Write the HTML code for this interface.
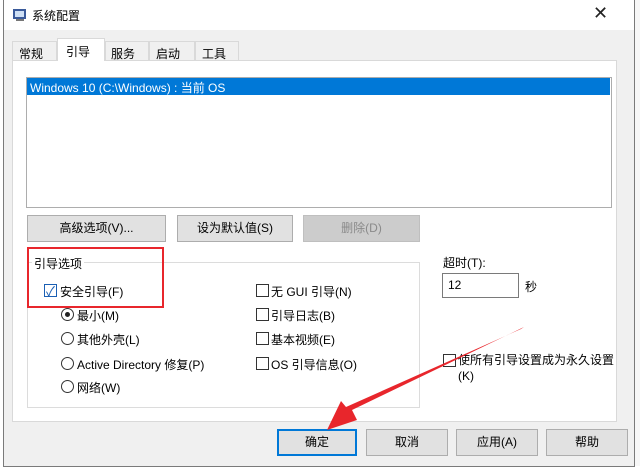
<!DOCTYPE html>
<html><head><meta charset="utf-8"><style>
*{box-sizing:border-box;margin:0;padding:0}
body{width:640px;height:473px;background:#fff;position:relative;overflow:hidden;font-family:"Liberation Sans","Noto Sans CJK SC",sans-serif;font-size:12px;color:#000}
.a{position:absolute}
.btn{position:absolute;background:#e1e1e1;border:1px solid #adadad;text-align:center;line-height:24px;font-size:12px}
.cb{position:absolute;width:13px;height:13px;border:1px solid #333;background:#fff}
.rb{position:absolute;width:13px;height:13px;border:1px solid #333;border-radius:50%;background:#fff}
</style></head><body>
<div class="a" style="left:634px;top:0;width:6px;height:473px;background:#f7f7f7"></div>
<div class="a" style="left:0;top:466px;width:640px;height:7px;background:#fff"></div>
<div class="a" style="left:3px;top:0;width:632px;height:467px;background:#f0f0f0;border:1px solid #7a7a7a"></div>
<div class="a" style="left:4px;top:0;width:630px;height:30px;background:#fff"></div>
<svg class="a" style="left:12px;top:7px" width="16" height="16"><rect x="1" y="2" width="13" height="10" fill="#3a5a9a"/><rect x="3" y="4" width="9" height="6" fill="#cfe0f5"/><rect x="4" y="12" width="8" height="2" fill="#777"/></svg>
<div class="a" style="left:32px;top:7px;font-size:12px">系统配置</div>
<div class="a" style="left:593px;top:3px;font-size:18px;color:#222">✕</div>
<div class="a" style="left:12px;top:60px;width:605px;height:362px;background:#fff;border:1px solid #d9d9d9"></div>
<div class="a" style="left:12px;top:41px;width:45px;height:20px;background:#f0f0f0;border:1px solid #d9d9d9;padding:3px 6px">常规</div>
<div class="a" style="left:57px;top:38px;width:48px;height:23px;background:#fff;border:1px solid #d9d9d9;border-bottom:none;padding:4px 8px">引导</div>
<div class="a" style="left:105px;top:41px;width:44px;height:20px;background:#f0f0f0;border:1px solid #d9d9d9;padding:3px 5px">服务</div>
<div class="a" style="left:149px;top:41px;width:46px;height:20px;background:#f0f0f0;border:1px solid #d9d9d9;padding:3px 6px">启动</div>
<div class="a" style="left:195px;top:41px;width:44px;height:20px;background:#f0f0f0;border:1px solid #d9d9d9;padding:3px 6px">工具</div>
<div class="a" style="left:26px;top:77px;width:586px;height:131px;border:1px solid #adadad;background:#fff"></div>
<div class="a" style="left:27px;top:78px;width:583px;height:17px;background:#0078d7;color:#fff;padding:1px 3px;font-size:12px">Windows 10 (C:\Windows) : 当前 OS</div>
<div class="btn" style="left:27px;top:215px;width:139px;height:27px">高级选项(V)...</div>
<div class="btn" style="left:177px;top:215px;width:116px;height:27px">设为默认值(S)</div>
<div class="btn" style="left:303px;top:215px;width:117px;height:27px;background:#ccc;border-color:#bfbfbf;color:#8a8a8a">删除(D)</div>
<div class="a" style="left:27px;top:262px;width:393px;height:146px;border:1px solid #dcdcdc"></div>
<div class="a" style="left:32px;top:255px;background:#fff;padding:0 2px">引导选项</div>
<div class="a" style="left:27px;top:247px;width:137px;height:61px;border:2px solid #e8262c"></div>
<div class="cb" style="left:44px;top:284px;border-color:#1a5fb4"></div>
<div class="a" style="left:46px;top:281px;color:#1a5fb4;font-size:13px">✓</div>
<div class="a" style="left:60px;top:283px">安全引导(F)</div>
<div class="rb" style="left:61px;top:308px"></div><div class="a" style="left:65px;top:312px;width:5px;height:5px;border-radius:50%;background:#222"></div>
<div class="a" style="left:77px;top:307px">最小(M)</div>
<div class="rb" style="left:61px;top:332px"></div><div class="a" style="left:77px;top:331px">其他外壳(L)</div>
<div class="rb" style="left:61px;top:357px"></div><div class="a" style="left:77px;top:356px">Active Directory 修复(P)</div>
<div class="rb" style="left:61px;top:380px"></div><div class="a" style="left:77px;top:379px">网络(W)</div>
<div class="cb" style="left:256px;top:284px"></div><div class="a" style="left:271px;top:283px">无 GUI 引导(N)</div>
<div class="cb" style="left:256px;top:308px"></div><div class="a" style="left:271px;top:307px">引导日志(B)</div>
<div class="cb" style="left:256px;top:332px"></div><div class="a" style="left:271px;top:331px">基本视频(E)</div>
<div class="cb" style="left:256px;top:357px"></div><div class="a" style="left:271px;top:356px">OS 引导信息(O)</div>
<div class="a" style="left:443px;top:254px">超时(T):</div>
<div class="a" style="left:442px;top:273px;width:77px;height:25px;border:1px solid #7a7a7a;background:#fff;padding:4px 5px">12</div>
<div class="a" style="left:525px;top:278px">秒</div>
<div class="cb" style="left:443px;top:354px"></div>
<div class="a" style="left:458px;top:352px;line-height:16px">使所有引导设置成为永久设置<br>(K)</div>
<div class="btn" style="left:277px;top:429px;width:80px;height:27px;border:2px solid #0078d7;line-height:23px">确定</div>
<div class="btn" style="left:366px;top:429px;width:82px;height:27px">取消</div>
<div class="btn" style="left:456px;top:429px;width:82px;height:27px">应用(A)</div>
<div class="btn" style="left:546px;top:429px;width:82px;height:27px">帮助</div>
<svg class="a" style="left:0;top:0" width="640" height="473"><polygon points="524,327 352,410 357,420 327,430 341,401 346,407 521,329" fill="#e8262c"/></svg>
</body></html>
